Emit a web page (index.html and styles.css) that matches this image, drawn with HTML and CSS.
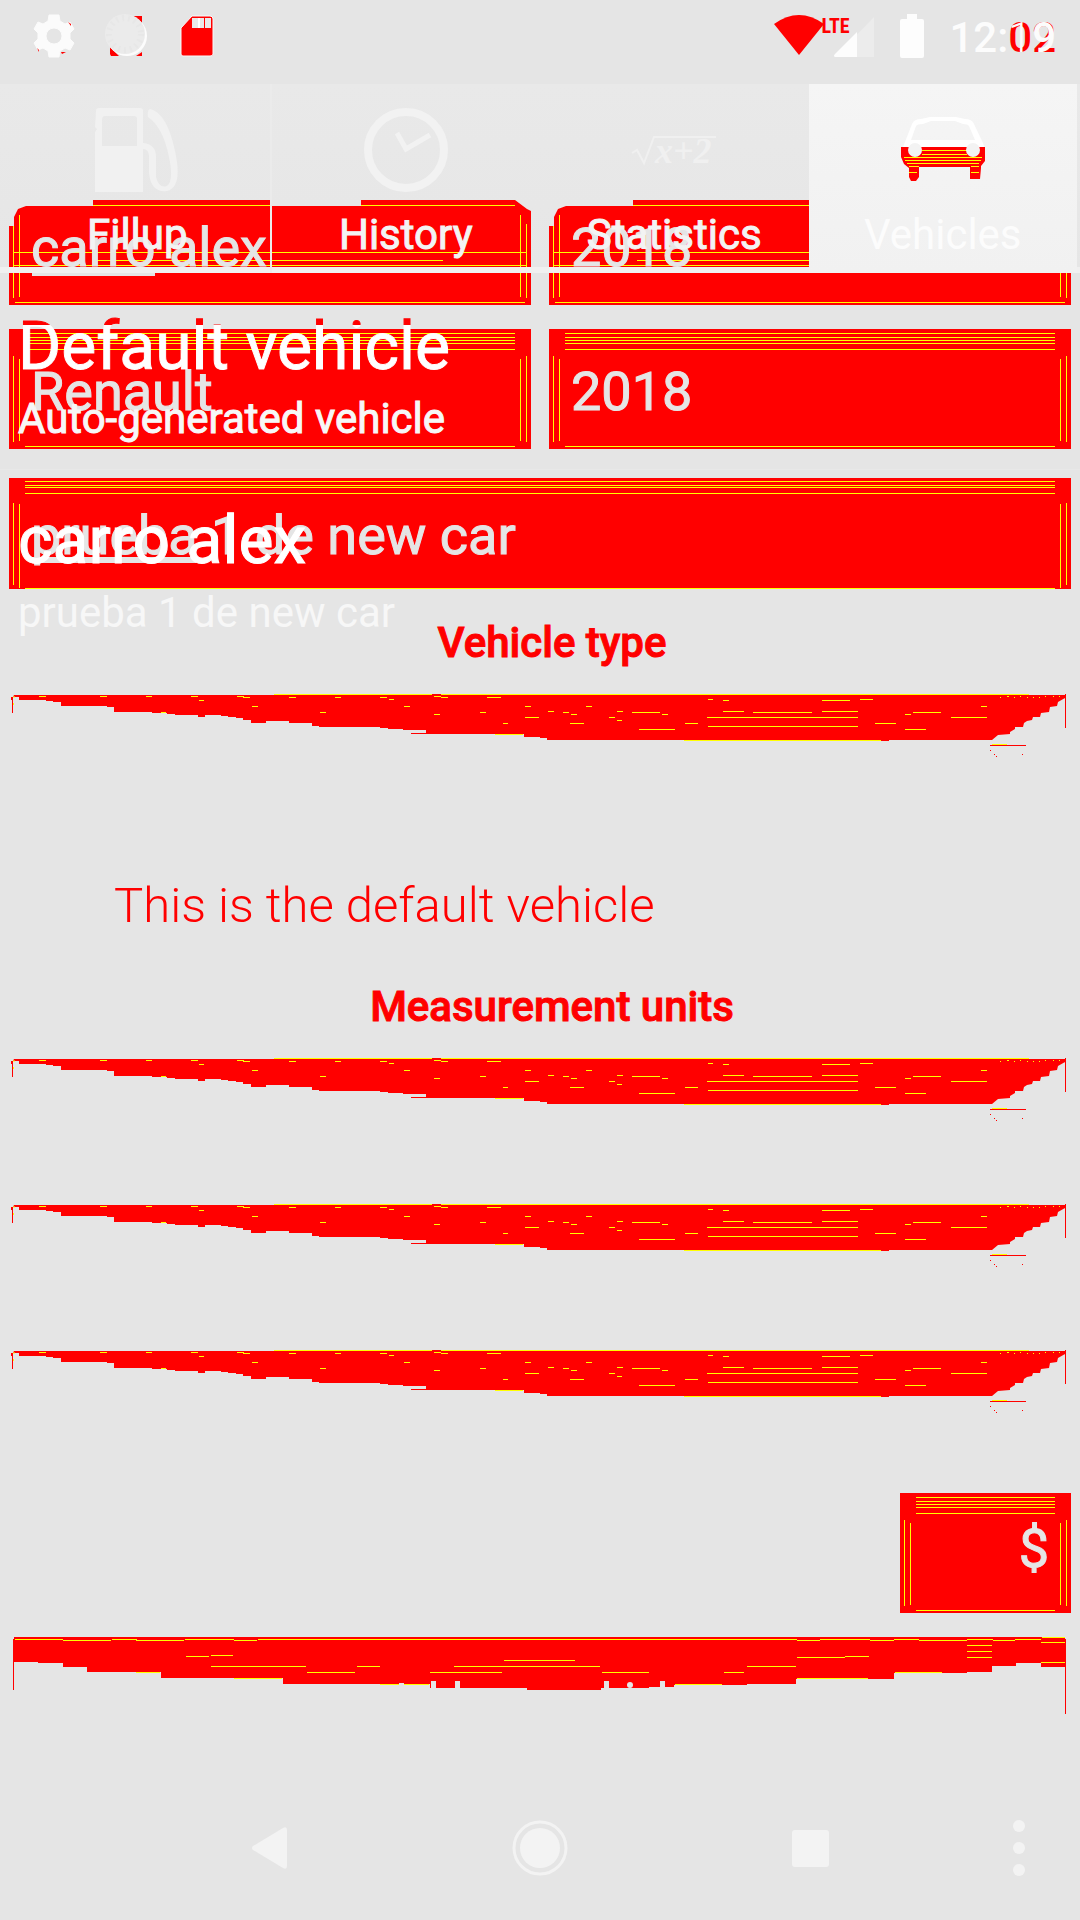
FILE: index.html
```html
<!DOCTYPE html>
<html lang="en">
<head>
<meta charset="utf-8">
<meta name="viewport" content="width=device-width, initial-scale=1">
<title>Vehicles</title>
<link rel="stylesheet" href="styles.css">
</head>
<body>
<svg class="defs" aria-hidden="true">
  <symbol id="spinner-shape" viewBox="9 0 1062 64" preserveAspectRatio="none">
    <path fill="#f00" d="M14 1H1065V4L1058 8L1057 12L1050 13L1049 18L1041 19L1040 23H1033L1032 26L1027 27L1024 29L1023 33H1015V35L1010 38V40L998 41L992 46H547V44H540V43H524V40H426V36H403V35H388V34H380V33H319V32H312V29H289V27H266V29H251V26H243V24H236V23H228V22H221V21H205V23H198V21H175V20H167V19H152V18H114V13H107V12H61V8H53V7H46V6H19V3H13V19H12V6H11V3H13ZM1065 0h1v34h-1zM990 51h36v1h-36zM411 39h16v1h-16zM432 0h9v1h-9zM881 46h8v1h-8zM990 56h1v1h-1zM994 60h1v1h-1zM996 62h1v1h-1zM1022 60h1v1h-1z"/>
    <path stroke="#ff0" d="M274 .5H432M441 .5H1029M39 2.500h7M100 2.500h7M146 2.500h6M191 2.500h7M199 6.500h5M237 2.500h7M243 3.500h7M252 12.500h6M161 18.500h5M289 3.500h7M320 18.500h6M335 3.500h6M380 3.500h7M389 5.500h5M404 12.500h6M434 20.500h6M434 2.500h7M441 3.500h7M480 18.500h6M487 3.500h14M503 29.500h5M525 12.500h6M525 23.500h14M495 40.500h28M548 17.500h6M563 18.500h6M571 20.500h6M586 12.500h6M617 17.500h6M609 23.500h6M617 26.500h5M632 18.500h28M662 20.500h6M570 29.500h14M639 35.500h36M685 29.500h13M708 5.500h5M723 6.500h6M723 17.500h21M753 18.500h59M822 6.500h28M822 17.500h36M707 23.500h151M708 32.500h150M684 46.500h197M860 5.500h13M875 29.500h21M905 20.500h6M913 18.500h28M905 35.500h21M951 23.500h36M981 12.500h6M992 50.500h15M1000 3.500h1M1007 2.500h2M1014 3.500h1M1020 2.500h1M1027 3.500h1M1033 3.500h1M1039 3.500h1M1045 2.500h1M1053 2.500h1M1059 2.500h1M14 2v2M13.500 9v2"/>
  </symbol>
</svg>
<div class="app">
  <header class="status">
    <div class="status-left">
      <svg width="42" height="44" viewBox="0 0 42 44" aria-hidden="true">
        <path fill="#fbfbfb" stroke="#fbfbfb" stroke-linejoin="round" fill-rule="evenodd" d="M16 1H26L27 7L32 10L37 8L41 15L37 19V25L41 29L37 36L32 34L27 37L26 43H16L15 37L10 34L5 36L1 29L5 25V19L1 15L5 8L10 10L15 7ZM21 14a8 8 0 1 0 0 16a8 8 0 1 0 0-16Z"/>
        <path fill="#f00" d="M35 8l3 2v2zM4 34l2 2v2zM28 38h5l-4 2z"/>
      </svg>
      <svg width="42" height="44" viewBox="0 0 42 44" aria-hidden="true">
        <path fill="#f00" d="M28 2H37V10ZM5 33L14 42H6L5 40ZM37 38v4h-6z"/>
        <circle cx="22" cy="22" r="20" fill="#fcfcfc"/>
        <circle cx="20" cy="20" r="20" fill="#ebebeb"/>
        <circle cx="20" cy="20" r="16" fill="none" stroke="#e7e7e7" stroke-width="6" stroke-dasharray="2 4"/>
      </svg>
      <svg class="sd" width="36" height="44" viewBox="0 0 36 44" aria-hidden="true">
        <path fill="#f00" stroke="#fafafa" stroke-width="1" d="M13 2H31Q34 2 34 5V40Q34 42 31 42H4Q2 42 2 40V14Z"/>
        <path fill="#e9e9e9" d="M13 4h19v10H13z"/>
        <path fill="#fff" d="M19 4h2v10h-2z"/>
        <path fill="#f00" d="M25 4h1v10h-1z"/>
      </svg>
    </div>
    <div class="status-right">
      <svg width="52" height="44" viewBox="0 0 52 44" aria-hidden="true">
        <path fill="#f00" d="M1 10Q26 -8 51 10L26 41Z"/>
      </svg>
      <span class="lte">LTE</span>
      <svg class="signal" width="42" height="44" viewBox="0 0 42 44" aria-hidden="true">
        <path fill="#ececec" d="M41 3V43H2Z"/>
        <path fill="#fdfdfd" d="M24 18V43H2Q0 42 2 40Z"/>
      </svg>
      <svg class="battery" width="26" height="44" viewBox="0 0 26 44" aria-hidden="true">
        <path fill="#fdfdfd" d="M8 0H18V5H23Q25 5 25 7V42Q25 44 23 44H3Q1 44 1 42V7Q1 5 3 5H8Z"/>
      </svg>
      <span class="clock"><span>12:</span><span class="digits"><span class="red">0</span><span class="thin">1</span></span><span class="digits"><span class="red">2</span><span>9</span></span></span>
    </div>
  </header>

  <main class="stack">
    <form class="form">
      <div class="pair">
        <div class="field marked">
          <input class="box box-top box-split" type="text" aria-label="Name" value="carro alex">
        </div>
        <div class="field">
          <input class="box box-top" type="text" aria-label="Year" value="2018">
        </div>
      </div>
      <div class="pair">
        <input class="box box-mid" type="text" aria-label="Make" value="Renault">
        <input class="box box-mid" type="text" aria-label="Model" value="2018">
      </div>
      <div class="field marked marked-long notes">
        <input class="box box-notes" type="text" aria-label="Notes" value="prueba 1 de new car">
      </div>

      <h2 class="heading">Vehicle type</h2>
      <div class="spinner">
        <svg aria-hidden="true"><use href="#spinner-shape"/></svg>
        <select aria-label="Vehicle type"><option></option></select>
      </div>

      <label class="default"><input type="checkbox"><span>This is the default vehicle</span></label>

      <h2 class="heading">Measurement units</h2>
      <div class="spinners">
        <div class="spinner">
          <svg aria-hidden="true"><use href="#spinner-shape"/></svg>
          <select aria-label="Distance"><option></option></select>
        </div>
        <div class="spinner">
          <svg aria-hidden="true"><use href="#spinner-shape"/></svg>
          <select aria-label="Volume"><option></option></select>
        </div>
        <div class="spinner">
          <svg aria-hidden="true"><use href="#spinner-shape"/></svg>
          <select aria-label="Economy"><option></option></select>
        </div>
      </div>

      <input class="box box-mid box-currency" type="text" aria-label="Currency" value="$">

      <button class="save" type="button" aria-label="Save">
        <svg viewBox="9 0 1062 80" preserveAspectRatio="none" aria-hidden="true">
          <path fill="#f00" d="M14 0H1065V30H1041V26H1016V29H992V35H967V36H894V42H796V47H747V48H674V50H649V51H601V53H527V51H430V47H283V41H161V35H87V30H63V26H38V25H14V53H13V2H14ZM1065 2h1v75h-1z"/>
          <path fill="#e5e5e5" d="M399 46h5v2h-5zM431 44h5v8h-5zM455 44h5v8h-5zM604 44h5v8h-5zM660 44h5v7h-5z"/>
          <circle cx="630" cy="48" r="3" fill="#e5e5e5"/>
          <path fill="none" stroke="#ff0" d="M15 2.500H63M63 3.500H111M112 2.500H137M136 3.500H184M185 2.500H234M234 3.500H257M258 2.500H797M797 3.500H820M820 2.500H870M870 3.500H894M894 2.500H919M919 3.500H967M967 2.500H993M993 3.500H1015M1015 2.500H1041M1041 5.500H1065M1042 .5H1065M186 19.500H209M211 18.500H233M211 29.500H306M307 35.500H355M136 35.500H160M357 29.500H380M234 41.500H282M380 47.500H399M404 47.500H429M430 35.500H502M454 29.500H600M504 23.500H575M602 35.500H649M724 35.500H744M747 29.500H796M797 20.500H845M845 19.500H869M675 47.500H722M797 41.500H868M895 35.500H942M967 8.500H992M967 14.500H992M967 20.500H992M1041 25.500H1065"/>
        </svg>
      </button>
    </form>

    <div class="overlay">
      <nav class="tabs">
        <a class="tab" href="#fillup">
          <svg width="88" height="86" viewBox="0 0 88 86" aria-hidden="true">
            <path fill="#f1f1f1" fill-rule="evenodd" d="M3 4Q3 1 6 1H47Q50 1 50 4V36Q63 37 63 50V70Q66 82 74 79Q81 74 76 50Q70 20 55 10Q54 3 57 2Q74 6 82 44Q90 80 74 84Q58 86 56 66V50Q56 42 50 42V85H2V25L4 22L2 20ZM9 13V39H44V12Q44 9 41 9H12Q9 9 9 13Z"/>
          </svg>
          <span>Fillup</span>
        </a>
        <a class="tab" href="#history">
          <svg width="88" height="86" viewBox="0 0 88 86" aria-hidden="true" fill="none" stroke="#f2f2f2">
            <circle cx="44" cy="43" r="38" stroke-width="8"/>
            <path stroke-width="5" d="M35 26L44 42L68 28"/>
          </svg>
          <span>History</span>
        </a>
        <a class="tab" href="#statistics">
          <svg width="88" height="86" viewBox="0 0 88 86" aria-hidden="true">
            <path fill="none" stroke="#f0f0f0" stroke-width="2" d="M2 46L7 43L14 56L24 30H86"/>
            <text class="formula" x="25" y="56">x+2</text>
          </svg>
          <span>Statistics</span>
        </a>
        <a class="tab tab-active" href="#vehicles" aria-current="page">
          <svg width="88" height="86" viewBox="0 0 88 86" aria-hidden="true">
            <path fill="#fff" fill-rule="evenodd" d="M4 40L13 17Q15 12 22 12L31 10H57L66 12Q73 12 75 17L84 36L86 42H2ZM17 19L12 33H76L70 19Q69 17 64 17L56 14H32L24 17Q18 17 17 19Z"/>
            <path fill="#f00" d="M2 40H86V54L82 59V61L81 72H71V60H20V70L17 74H12L10 70V61L5 57L2 50Z"/>
            <path stroke="#ff0" d="M23 43.500H68M23 47.500H68M5 50.500H83M6 53.500H82M8 56.500H80M10 59.500H20M72 59.500H80M10 65.500H18M72 65.500H80"/>
            <circle cx="16" cy="43" r="7" fill="#f3f3f3"/><circle cx="74" cy="43" r="7" fill="#f3f3f3"/>
          </svg>
          <span>Vehicles</span>
        </a>
      </nav>
      <ul class="list">
        <li><span class="title title-tipped">Default vehicle</span><span class="sub sub-strong">Auto-generated vehicle</span></li>
        <li><span class="title">carro alex</span><span class="sub">prueba 1 de new car</span></li>
      </ul>
    </div>
  </main>

  <footer class="navbar">
    <button type="button" aria-label="Back"><svg width="56" height="56" viewBox="0 0 56 56"><path fill="#f3f3f3" d="M11 26L41 8Q45 6 45 10V46Q45 50 41 48L11 30Q9 28 11 26Z"/></svg></button>
    <button type="button" aria-label="Home"><svg width="56" height="56" viewBox="0 0 56 56"><circle cx="28" cy="28" r="26" fill="none" stroke="#f3f3f3" stroke-width="3"/><circle cx="28" cy="28" r="20" fill="#f3f3f3"/></svg></button>
    <button type="button" aria-label="Recent apps"><svg width="56" height="56" viewBox="0 0 56 56"><rect x="10" y="10" width="37" height="37" rx="3" fill="#f3f3f3"/></svg></button>
    <button class="more" type="button" aria-label="More"><svg width="12" height="56" viewBox="0 0 12 56"><g fill="#f3f3f3"><circle cx="6" cy="6" r="6"/><circle cx="6" cy="28" r="6"/><circle cx="6" cy="50" r="6"/></g></svg></button>
  </footer>
</div>
</body>
</html>
```
FILE: styles.css
```css
* { box-sizing: border-box; }

body {
  margin: 0;
  background: #e5e5e5;
  font-family: Roboto, sans-serif;
  font-size: 42px;
  line-height: 50px;
}

svg { display: block; flex: none; }
.defs { position: absolute; width: 0; height: 0; }

.app {
  display: flex;
  flex-direction: column;
  min-height: 100vh;
}

/* Status bar */
.status {
  display: flex;
  justify-content: space-between;
  height: 84px;
  padding: 14px 24px 0 33px;
  color: #fcfcfc;
}
.status-left { display: flex; gap: 30px; }
.sd { margin-left: 2px; }
.status-right { display: flex; }
.lte {
  width: 10px;
  margin-left: -4px;
  color: #f00;
  font: 700 20px/24px "Roboto Condensed", "Liberation Sans Narrow", Roboto, sans-serif;
}
.signal { margin: 0 24px 0 2px; }
.battery { margin-right: 24px; }
.clock { display: flex; font-weight: 500; line-height: 48px; }
.digits { display: grid; }
.digits > * { grid-area: 1 / 1; }
.thin { font-weight: 300; }
.red { color: #f00; }

/* The form and the vehicle list share one cell */
.stack {
  display: grid;
  flex: 1;
  align-items: start;
  background: linear-gradient(#e9e9e9, #e6e6e6) 0 0 / 100% 183px no-repeat;
}
.form, .overlay { grid-area: 1 / 1; min-width: 0; }

/* Form */
.form {
  display: flex;
  flex-direction: column;
  padding: 116px 9px 0;
}
.pair {
  display: grid;
  grid-template-columns: 1fr 1fr;
  gap: 18px;
  margin-bottom: 24px;
}
.field { position: relative; }
.box {
  display: block;
  width: 100%;
  border: 0;
  margin: 0;
  padding: 0 22px;
  color: #e5e5e5;
  background-color: #f00;
  background-repeat: no-repeat;
  font: 400 54px/64px Roboto, sans-serif;
  -webkit-text-stroke: 1px #e5e5e5;
}
.box-mid {
  height: 120px;
  padding-top: 5px;
  background-image:
    linear-gradient(#ff0, #ff0), linear-gradient(#ff0, #ff0), linear-gradient(#ff0, #ff0),
    linear-gradient(#ff0, #ff0), linear-gradient(#ff0, #ff0), linear-gradient(#ff0, #ff0),
    linear-gradient(#ff0, #ff0), linear-gradient(#ff0, #ff0), linear-gradient(#ff0, #ff0),
    linear-gradient(#ff0, #ff0);
  background-position: 50% 4px, 50% 8px, 50% 11px, 50% 14px, 50% 20px, 50% 117px,
    4px 27px, 10px 30px, calc(100% - 10px) 30px, calc(100% - 4px) 27px;
  background-size:
    calc(100% - 32px) 1px, calc(100% - 32px) 1px, calc(100% - 32px) 1px,
    calc(100% - 32px) 1px, calc(100% - 32px) 1px, calc(100% - 32px) 1px,
    1px 86px, 1px 82px, 1px 82px, 1px 86px;
}
.box-top {
  height: 105px;
  padding-bottom: 10px;
  background-image:
    linear-gradient(#ff0, #ff0), linear-gradient(#ff0, #ff0), linear-gradient(#ff0, #ff0),
    linear-gradient(#ff0, #ff0), linear-gradient(#ff0, #ff0), linear-gradient(#ff0, #ff0),
    linear-gradient(#ff0, #ff0), linear-gradient(#ff0, #ff0), linear-gradient(#ff0, #ff0);
  background-position: 84px 5px, 4px 52px, 50% 60px, 50% 65px, 50% 102px,
    4px 24px, 10px 15px, calc(100% - 10px) 15px, calc(100% - 4px) 24px;
  background-size:
    calc(100% - 100px) 1px, calc(100% - 8px) 1px, 346px 1px, calc(100% - 8px) 1px,
    calc(100% - 12px) 1px, 1px 74px, 1px 82px, 1px 82px, 1px 74px;
  clip-path: polygon(0 26px, 5px 26px, 5px 17px, 9px 9px, 17px 6px, 84px 6px, 84px 0, 100% 0, 100% 100%, 0 100%);
}
.box-split {
  clip-path: polygon(0 26px, 5px 26px, 5px 17px, 9px 9px, 17px 6px, 84px 6px, 84px 0, 50% 0, 50% 6px, 352px 6px, 352px 0, calc(100% - 16px) 0, calc(100% - 4px) 9px, 100% 11px, 100% 100%, 0 100%);
}
.notes { margin-top: 5px; }
.box-notes {
  height: 111px;
  padding-top: 4px;
  background-image:
    linear-gradient(#ff0, #ff0), linear-gradient(#ff0, #ff0), linear-gradient(#ff0, #ff0),
    linear-gradient(#ff0, #ff0), linear-gradient(#ff0, #ff0), linear-gradient(#ff0, #ff0),
    linear-gradient(#ff0, #ff0), linear-gradient(#ff0, #ff0), linear-gradient(#ff0, #ff0);
  background-position: 50% 3px, 50% 7px, 50% 9px, 50% 15px, 50% 110px,
    4px 25px, 10px 26px, calc(100% - 10px) 26px, calc(100% - 4px) 25px;
  background-size:
    calc(100% - 32px) 1px, calc(100% - 32px) 1px, calc(100% - 32px) 1px,
    calc(100% - 32px) 1px, calc(100% - 32px) 1px,
    1px 82px, 1px 84px, 1px 84px, 1px 82px;
}
/* Line under the word being composed */
.marked::after {
  content: "";
  position: absolute;
  left: 23px;
  top: 70px;
  width: 123px;
  height: 6px;
  background: #e5e5e5;
}
.marked-long::after { top: 79px; width: 164px; }

.heading {
  margin: 29px 0 26px;
  padding-left: 24px;
  color: #f00;
  font-size: 42px;
  font-weight: 500;
  line-height: 50px;
  text-align: center;
  -webkit-text-stroke: 1px #f00;
}
.spinner { display: grid; height: 64px; }
.spinner > * { grid-area: 1 / 1; width: 100%; height: 100%; }
.spinner select {
  appearance: none;
  border: 0;
  background: transparent;
}
.spinners { display: grid; gap: 82px; }
.default {
  display: flex;
  margin: 120px 0 19px;
  color: #f00;
  font-size: 49px;
  font-weight: 300;
  line-height: 56px;
}
.default input {
  appearance: none;
  width: 81px;
  margin: 0 24px 0 0;
}
.box-currency {
  align-self: flex-end;
  width: 171px;
  margin-top: 79px;
  padding: 0 22px 10px;
  text-align: right;
}
.save {
  height: 80px;
  margin: 24px 0 0;
  padding: 0;
  border: 0;
  background: transparent;
}
.save svg { width: 100%; height: 100%; }

/* Tabs */
.overlay { position: relative; }
.tabs {
  display: grid;
  grid-template-columns: repeat(4, 1fr);
  height: 189px;
  padding: 0 3px;
  background: linear-gradient(#f0f0f0, #f0f0f0) 0 100% / 100% 6px no-repeat;
}
.tab {
  display: flex;
  flex-direction: column;
  align-items: center;
  gap: 17px;
  padding-top: 23px;
  color: #f3f3f3;
  text-decoration: none;
  -webkit-text-stroke: 1px #f3f3f3;
}
.tab:first-child { box-shadow: inset -2px 0 #ebebeb; }
.tab-active {
  background: linear-gradient(#f5f5f5, #f1f1f1);
  color: #fcfcfc;
  -webkit-text-stroke: 0;
}
.formula {
  fill: #f0f0f0;
  font: italic 700 36px "Liberation Serif", serif;
}

/* Vehicle list */
.list { margin: 0; padding: 3px 0 0; list-style: none; }
.list li {
  display: flex;
  flex-direction: column;
  align-items: flex-start;
  gap: 8px;
  padding: 32px 18px 25px;
  border-bottom: 1px solid #e8e8e8;
}
.list li:last-child { border-bottom: 0; }
.title {
  color: #fff;
  font-size: 66px;
  line-height: 78px;
  -webkit-text-stroke: 1px #fff;
}
.title-tipped {
  background: linear-gradient(#f00 17px, #fff 17px);
  background-clip: text;
  -webkit-background-clip: text;
  color: transparent;
  -webkit-text-stroke: 1px transparent;
}
.sub { color: #f7f7f7; }
.sub-strong { -webkit-text-stroke: 1px #f7f7f7; }

/* Navigation bar */
.navbar {
  display: grid;
  grid-template-columns: 2fr 2fr 2fr 1fr;
  height: 144px;
  padding-left: 12.5%;
}
.navbar button {
  display: grid;
  place-items: center;
  padding: 0;
  border: 0;
  background: transparent;
}
.navbar .more { padding-left: 12px; }
```
